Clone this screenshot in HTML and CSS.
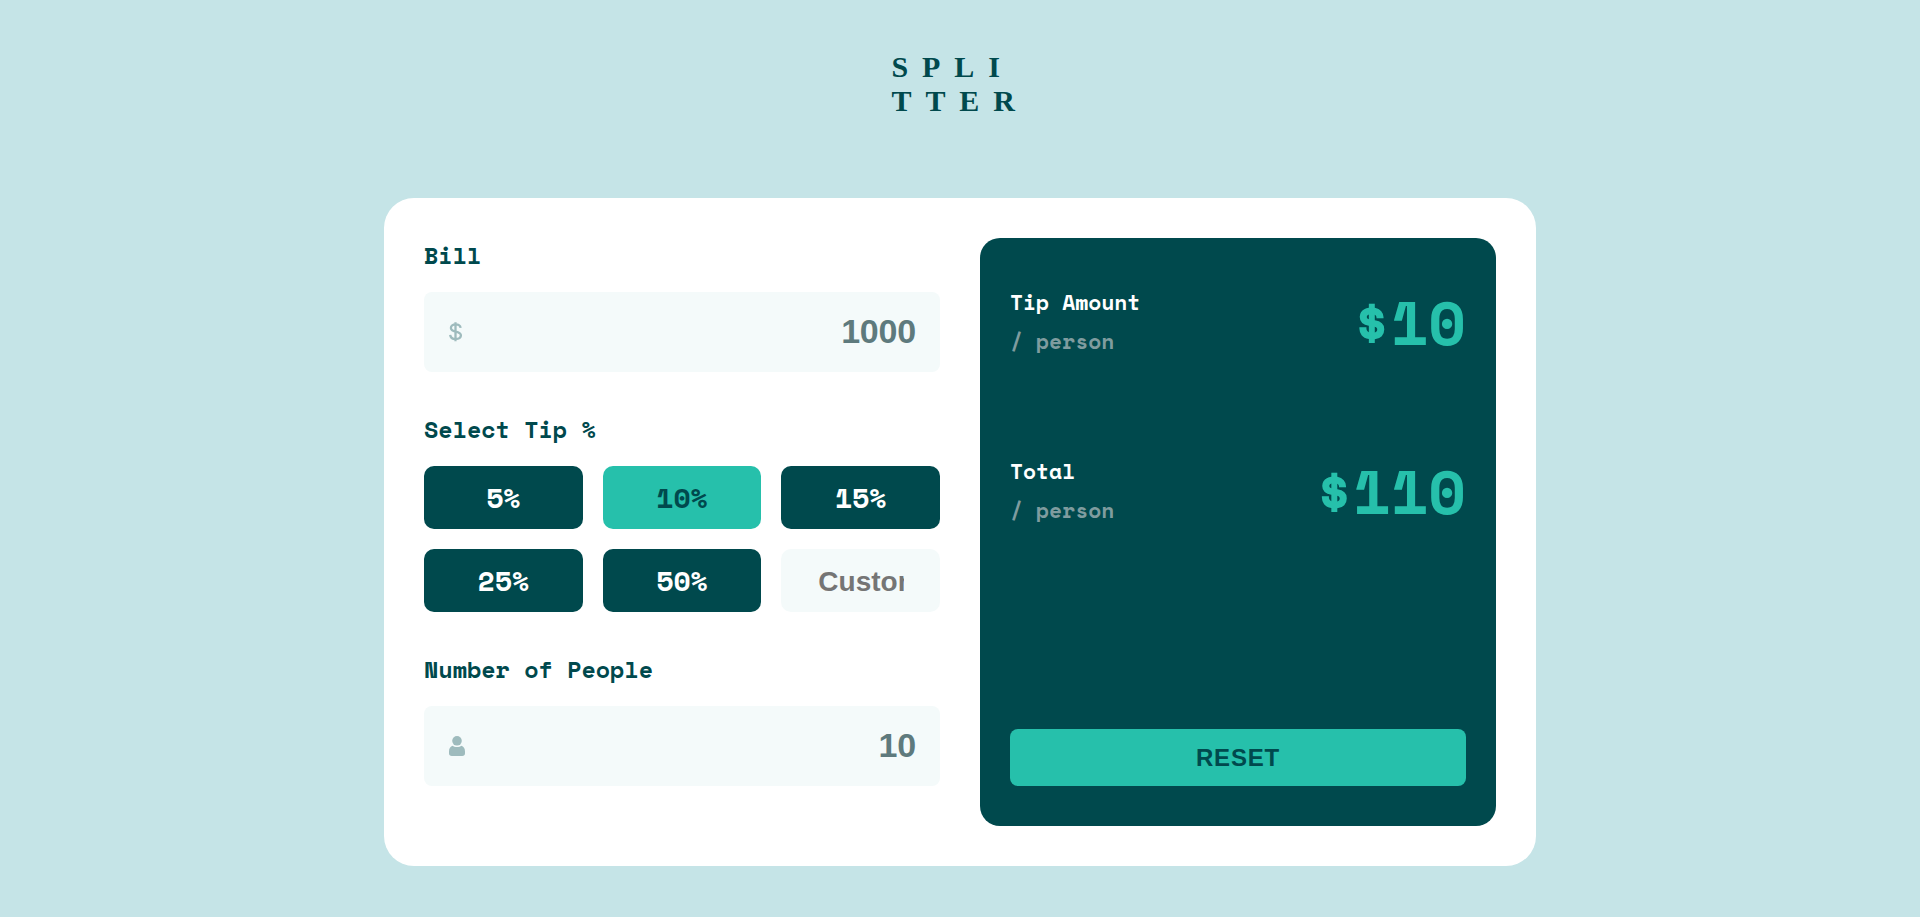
FILE: index.html
```html
<!DOCTYPE html>
<html lang="en">
<head>
<meta charset="utf-8">
<title>Splitter</title>
<link rel="stylesheet" href="styles.css">
</head>
<body>
<header class="logo">SPLI<br>TTER</header>
<main class="card">
  <section class="form">
    <label class="label">Bill</label>
    <div class="field">
      <svg class="icon" width="13" height="20" viewBox="0 0 13 20" fill="none" stroke="#9ebbbd" stroke-width="2.3"><path d="M6.5 .2v19M11.6 5.9C11.3 3.5 9.3 2.4 6.6 2.4c-2.8 0-4.7 1.3-4.7 3.5 0 5 10 2.2 10 7.4 0 2.3-2 3.7-5.2 3.7-3.3 0-5.3-1.5-5.5-4.2"/></svg>
      <span class="value">1000</span>
    </div>
    <label class="label spaced">Select Tip %</label>
    <div class="tips">
      <button class="tip">5%</button>
      <button class="tip active">10%</button>
      <button class="tip">15%</button>
      <button class="tip">25%</button>
      <button class="tip">50%</button>
      <input class="custom" placeholder="Custom">
    </div>
    <label class="label spaced">Number of People</label>
    <div class="field">
      <svg class="icon" width="16" height="20" viewBox="0 0 16 20" fill="#9ebbbd"><circle cx="8" cy="4.8" r="4.8"/><path d="M3.7 9.8C5 11.4 11 11.4 12.3 9.8 14.6 10.2 16 12.5 16 15.5v1.7C16 19 15 20 13.2 20H2.8C1 20 0 19 0 17.2v-1.7C0 12.5 1.4 10.2 3.7 9.8z"/></svg>
      <span class="value">10</span>
    </div>
  </section>
  <section class="results">
    <div class="result">
      <div class="caption"><div>Tip Amount</div><div class="per">/ person</div></div>
      <div class="amount">$10</div>
    </div>
    <div class="result">
      <div class="caption"><div>Total</div><div class="per">/ person</div></div>
      <div class="amount">$110</div>
    </div>
    <button class="reset">RESET</button>
  </section>
</main>
</body>
</html>
```
FILE: styles.css
```css
* { box-sizing: border-box; }
body {
  margin: 0;
  min-height: 917px;
  background: #c5e4e7;
  color: #00494d;
  font-family: "Space Mono", "Liberation Mono", monospace;
  font-weight: 700;
  display: flex;
  flex-direction: column;
  align-items: center;
}
button, input { border: 0; margin: 0; font-weight: 700; }
.logo {
  width: 137px;
  height: 148px;
  margin-top: 50px;
  font: 700 30px/34px "Liberation Serif", serif;
  letter-spacing: 13.9px;
}
.card {
  width: 1152px;
  height: 668px;
  padding: 40px;
  border-radius: 30px;
  background: #fff;
  display: grid;
  grid-template-columns: 1fr 1fr;
  gap: 40px;
}
.label {
  display: block;
  height: 54px;
  font-size: 23.4px;
  line-height: 35px;
}
.spaced { margin-top: 40px; }
.field {
  height: 80px;
  padding: 0 24px 0 25px;
  border-radius: 8px;
  background: #f4fafa;
  display: flex;
  align-items: center;
  justify-content: space-between;
}
.value {
  padding-bottom: 2px;
  font: 700 34px/40px "Liberation Sans", sans-serif;
  letter-spacing: -0.2px;
  color: #5e7a7d;
}
.tips {
  display: grid;
  grid-template-columns: repeat(3, minmax(0, 1fr));
  grid-auto-rows: 63px;
  gap: 20px;
}
.tip {
  padding: 0;
  border-radius: 10px;
  background: #00494d;
  color: #fff;
  font: 700 28px/40px "Space Mono", "Liberation Mono", monospace;
}
.active { background: #26c0ab; color: #00494d; }
.custom {
  width: 100%;
  padding: 3px 36px 0 37px;
  border-radius: 10px;
  background: #f4fafa;
  font: 700 28px "Liberation Sans", sans-serif;
}
.custom::placeholder { color: #757575; }
.results {
  padding: 40px 30px;
  border-radius: 20px;
  background: #00494d;
  display: flex;
  flex-direction: column;
}
.result {
  height: 169px;
  display: flex;
  justify-content: space-between;
  align-items: flex-start;
}
.caption {
  padding-top: 5px;
  color: #fff;
  font-size: 21.3px;
  line-height: 39px;
}
.per { color: #7f9c9f; }
.amount {
  color: #26c0ab;
  font-size: 61.5px;
  line-height: 88px;
}
.reset {
  height: 57px;
  margin-top: auto;
  border-radius: 8px;
  background: #26c0ab;
  color: #00494d;
  font: 700 24px "Liberation Sans", sans-serif;
  letter-spacing: 0.8px;
}
```
